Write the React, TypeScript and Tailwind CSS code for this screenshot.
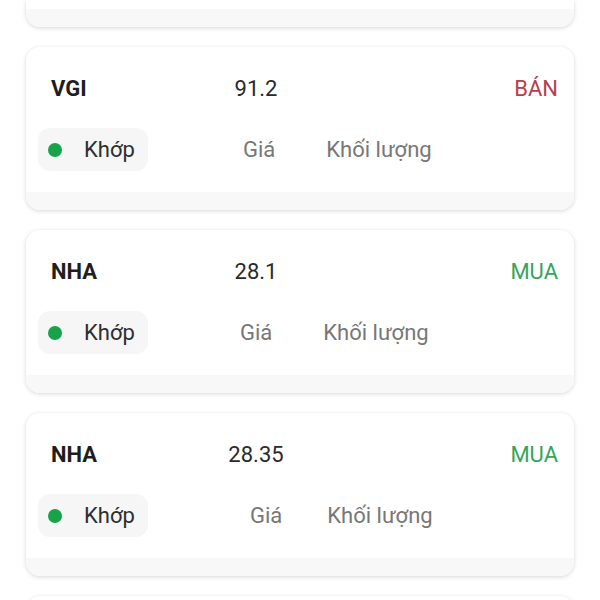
const orders = [
  { sym: 'VGI', price: '91.2', side: 'BÁN', giaMl: 'ml-[95px]', klMl: 'ml-[51px]' },
  { sym: 'NHA', price: '28.1', side: 'MUA', giaMl: 'ml-[92px]', klMl: 'ml-[51px]' },
  { sym: 'NHA', price: '28.35', side: 'MUA', giaMl: 'ml-[102px]', klMl: 'ml-[45px]' },
]

function OrderCard({ o }: { o: (typeof orders)[number] }) {
  const sell = o.side === 'BÁN'
  return (
    <div className="h-[163px] shrink-0 rounded-[14px] bg-white shadow-[0_1px_4px_rgba(0,0,0,0.16)] overflow-hidden flex flex-col">
      <div className="flex items-center h-[40px] mt-[21px] pl-[25px] pr-[16px] text-[22px]">
        <div className="w-[160px] font-bold text-[#1e1e1e]">{o.sym}</div>
        <div className="w-[90px] text-center text-[#2a2a2a]">{o.price}</div>
        <div className="flex-1" />
        <div className={sell ? 'text-[#b4414e]' : 'text-[#35a55a]'}>{o.side}</div>
      </div>
      <div className="flex items-center mt-[20px] pl-[12px] text-[22px]">
        <div className="flex items-center w-[110px] h-[43px] rounded-[12px] bg-[#f6f6f6] pl-[10px]">
          <span className="w-[14px] h-[14px] rounded-full bg-[#16a34a]" />
          <span className="ml-[22px] text-[#2e2e2e]">Khớp</span>
        </div>
        <span className={`${o.giaMl} text-[#777777]`}>Giá</span>
        <span className={`${o.klMl} text-[#777777]`}>Khối lượng</span>
      </div>
      <div className="flex-1" />
      <div className="h-[18px] bg-[#f8f8f8]" />
    </div>
  )
}

export default function App() {
  return (
    <div className="w-[600px] h-[600px] overflow-hidden bg-white font-['Roboto',sans-serif]">
      <div className="flex flex-col gap-[20px] px-[26px]">
        <div className="h-[27px] shrink-0 rounded-b-[14px] bg-white shadow-[0_1px_4px_rgba(0,0,0,0.16)] overflow-hidden flex flex-col">
          <div className="flex-1" />
          <div className="h-[18px] bg-[#f8f8f8]" />
        </div>
        {orders.map((o, i) => (
          <OrderCard key={i} o={o} />
        ))}
        <div className="h-[40px] shrink-0 rounded-[14px] bg-white shadow-[0_1px_4px_rgba(0,0,0,0.16)]" />
      </div>
    </div>
  )
}
